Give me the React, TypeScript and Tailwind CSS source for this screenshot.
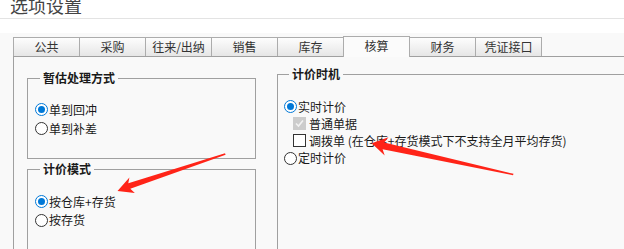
import React from 'react';

const font = { fontFamily: '"Noto Sans CJK SC", "Noto Sans", sans-serif' };

const tabs = ['公共', '采购', '往来/出纳', '销售', '库存', '核算', '财务', '凭证接口'];
const active = '核算';

function Radio({ checked, label }: { checked?: boolean; label: string }) {
  return (
    <div className="flex items-center">
      <span
        className={
          'flex h-[13px] w-[13px] flex-none items-center justify-center rounded-full border bg-white ' +
          (checked ? 'border-[#0078d7]' : 'border-[#333]')
        }
      >
        {checked && <span className="h-[7px] w-[7px] rounded-full bg-[#0078d7]" />}
      </span>
      <span className="ml-px text-[12px] leading-none text-[#1a1a1a]">{label}</span>
    </div>
  );
}

function Check({ checked, disabled, label }: { checked?: boolean; disabled?: boolean; label: string }) {
  return (
    <div className="ml-[9px] flex items-center">
      <span
        className={
          'flex h-[13px] w-[13px] flex-none items-center justify-center border ' +
          (disabled ? 'border-[#cccccc] bg-[#cccccc]' : 'border-[#333] bg-white')
        }
      >
        {checked && (
          <svg width="11" height="11" viewBox="0 0 11 11">
            <path d="M2 5.5 L4.5 8 L9 2.5" fill="none" stroke="#f2f2f2" strokeWidth="1.6" />
          </svg>
        )}
      </span>
      <span className="ml-[3px] text-[12px] leading-none text-[#1a1a1a]">{label}</span>
    </div>
  );
}

function Group({ title, className, children }: { title: string; className: string; children: React.ReactNode }) {
  return (
    <fieldset className={'border border-[#a0a0a0] ' + className}>
      <legend className="ml-[5px] px-[3px] text-[12px] font-semibold leading-[18px] text-[#1a1a1a]">{title}</legend>
      {children}
    </fieldset>
  );
}

export default function App() {
  return (
    <div className="relative h-[249px] w-[624px] overflow-hidden bg-white" style={font}>
      {/* Header */}
      <div className="h-[23px] border-b border-[#e3e3e3] pl-[10px]">
        <div className="-mt-[4px] text-[18px] leading-[18px] text-[#444]">选项设置</div>
      </div>

      <div className="mt-[14px] h-full bg-[#f9f9f9] pl-[13px]">
        {/* Tabs */}
        <div className="flex h-[23px] items-end">
          {tabs.map((t, i) =>
            t === active ? (
              <div
                key={t}
                className="relative z-10 -mb-px -ml-px flex h-[21px] w-[67px] items-center justify-center border border-b-0 border-[#acacac] bg-[#fbfbfb] pb-[3px] text-[12px] text-[#333]"
              >
                {t}
              </div>
            ) : (
              <div
                key={t}
                className={
                  'flex h-[19px] w-[67px] items-center justify-center border border-b-0 border-[#acacac] bg-gradient-to-b from-[#fdfdfd] to-[#e6e6e6] text-[12px] text-[#333] ' +
                  (i === 0 ? '' : '-ml-px')
                }
              >
                {t}
              </div>
            )
          )}
        </div>

        {/* Content */}
        <div className="flex h-full border-l border-t border-[#a0a0a0] bg-[#f9f9f9]">
          <div className="flex flex-none flex-col pl-[13px] pt-[12px]">
            <Group title="暂估处理方式" className="h-[90px] w-[229px] pl-[7px] pt-[13px]">
              <div className="flex h-[19px] items-center">
                <Radio checked label="单到回冲" />
              </div>
              <div className="flex h-[19px] items-center">
                <Radio label="单到补差" />
              </div>
            </Group>
            <Group title="计价模式" className="mt-[1px] h-[120px] w-[229px] pl-[7px] pt-[14px]">
              <div className="flex h-[19px] items-center">
                <Radio checked label="按仓库+存货" />
              </div>
              <div className="flex h-[18px] items-center">
                <Radio label="按存货" />
              </div>
            </Group>
          </div>

          <div className="ml-[21px] flex-none pt-[8px]">
            <Group title="计价时机" className="h-[200px] w-[400px] pl-[6px] pt-[15px]">
              <div className="flex h-[17px] items-center">
                <Radio checked label="实时计价" />
              </div>
              <div className="flex h-[17px] items-center">
                <Check checked disabled label="普通单据" />
              </div>
              <div className="flex h-[17px] items-center">
                <Check label="调拨单 (在仓库+存货模式下不支持全月平均存货)" />
              </div>
              <div className="flex h-[18px] items-center">
                <Radio label="定时计价" />
              </div>
            </Group>
          </div>
        </div>
      </div>

      {/* Red annotation arrows */}
      <svg className="pointer-events-none absolute left-0 top-0" width="624" height="249">
        <polygon
          fill="#ff2418"
          points="117.5,191 129.4,177.5 128.3,183.2 225,153.3 225.6,154.8 130.3,188.8 134.8,193"
        />
        <polygon
          fill="#ff2418"
          points="371.7,143.3 388.5,137.2 384.2,142.5 513.5,173.8 513,175.2 382.6,149.3 384.7,155.5"
        />
      </svg>
    </div>
  );
}
